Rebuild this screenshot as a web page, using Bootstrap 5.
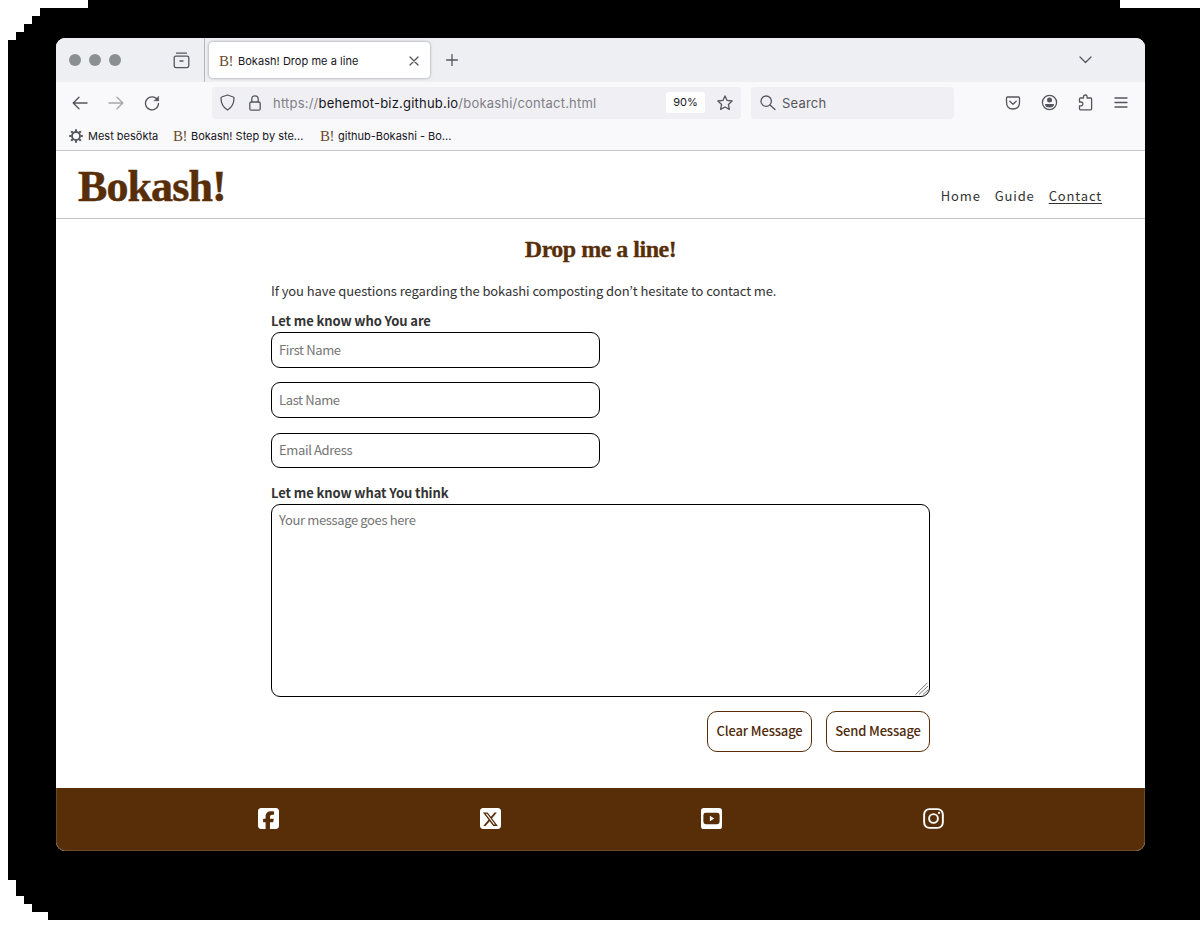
<!DOCTYPE html>
<html lang="en">
<head>
<meta charset="utf-8">
<meta name="viewport" content="width=device-width, initial-scale=1">
<title>Bokash! Drop me a line</title>
<link href="https://cdn.jsdelivr.net/npm/bootstrap@5.3.0/dist/css/bootstrap.min.css" rel="stylesheet">
<style>
:root { --brown: #582e09; }
body { background: #fff; overflow: hidden; }
svg { display: block; flex: none; }
.backdrop { width: 1201px; height: 925px; padding: 38px 56px 0; background: #000;
  clip-path: polygon(88px 0, 1120px 0, 1120px 8px, 1200px 8px, 1200px 920px, 48px 920px, 48px 912px, 32px 912px, 32px 904px, 24px 904px, 24px 896px, 16px 896px, 16px 880px, 8px 880px, 8px 40px, 16px 40px, 16px 32px, 24px 32px, 24px 24px, 32px 24px, 32px 16px, 40px 16px, 40px 8px, 88px 8px); }
.window { width: 1089px; height: 813px; border-radius: 9px; background: #fff; }
.chrome { font-family: Inter, sans-serif; color: #15141a; font-size: 11px; line-height: 16px; }
.chrome svg { fill: none; stroke: #55555d; stroke-width: 1.3; stroke-linecap: round; stroke-linejoin: round; }
.tabbar { height: 44px; background: #eeeff3; border-radius: 9px 9px 0 0; }
.dot { width: 12px; height: 12px; border-radius: 50%; background: #8b8f91; margin-right: 8px; }
.tabrule { width: 1px; height: 44px; background: #b5b5b9; margin-left: 13px; }
.browsertab { width: 221px; height: 36px; background: #fff; border-radius: 4px; box-shadow: 0 0 3px rgba(0,0,0,.4); margin-left: 4px; padding: 1px 11px 0 10px; }
.fav { font-family: "Liberation Serif", serif; font-size: 15px; line-height: 16px; color: #6b4a2a; width: 13px; letter-spacing: -.5px; white-space: nowrap; }
.toolbar { height: 37px; background: #f9f9fb; padding: 4px 0 0; }
.urlbox { height: 32px; background: #f0f0f4; border-radius: 4px; }
.urltext { font-size: 13px; color: #7f7f86; letter-spacing: .21px; }
.urltext b { font-weight: 400; color: #15141a; }
.searchtext { font-size: 13px; color: #56565c; letter-spacing: .2px; }
.zoompill { width: 39px; height: 21px; background: #fff; border-radius: 3px; line-height: 21px; }
.bookmarks { height: 32px; background: #f9f9fb; border-bottom: 1px solid #c6c6c8; padding: 9px 0 0 13px; }
.site { font-family: "Noto Sans CJK KR", "Noto Sans", sans-serif; color: #333; font-size: 13px; }
.sitehead { height: 68px; border-bottom: 1px solid #c4c4c4; padding: 0 43px 0 22px; }
.logo { font-family: "Liberation Serif", serif; font-weight: 700; font-size: 44px; line-height: 50px; letter-spacing: -.9px; -webkit-text-stroke: .5px var(--brown); color: var(--brown); margin-top: 11px; }
.menu { gap: 14px; margin-top: 35px; }
.menu a { color: #333; text-decoration: none; letter-spacing: .85px; line-height: 20px; font-size: 13px; }
.menu a.current { text-decoration: underline; text-underline-offset: 2px; }
.page { height: 569px; padding: 16px 215px 0; }
.headline { font-family: "Liberation Serif", serif; font-weight: 700; font-size: 24px; line-height: 28px; letter-spacing: -.5px; -webkit-text-stroke: .3px var(--brown); color: var(--brown); }
.intro { line-height: 20px; margin: 18px 0 0; letter-spacing: -.09px; }
.formlabel { display: block; font-weight: 700; line-height: 20px; height: 21px; letter-spacing: -.1px; }
.field.form-control { font: inherit; border: 1px solid #000; border-radius: 9px; padding: 0 7px 2px; line-height: 20px; letter-spacing: -.36px; color: #333; background: #fff; }
.field::placeholder { color: #757575; opacity: 1; }
input.field { width: 329px; height: 36px; }
textarea.field.form-control { height: 193px; padding-top: 5px; resize: none; }
.grip { position: absolute; right: 1px; bottom: 1px; }
.action.btn { font: inherit; height: 41px; line-height: 20px; border: 1px solid var(--brown); border-radius: 10px; color: #4f2a0a; background: #fff; padding: 0 0 2px; font-weight: 500; letter-spacing: -.14px; }
.sitefoot { height: 63px; background: var(--brown); border-radius: 0 0 9px 9px; border: 1px solid #6b4a28; border-top: 0; padding: 20px 200px 0 201px; }
</style>
</head>
<body>
<div class="backdrop">
<div class="window">
<div class="chrome">
  <div class="tabbar d-flex align-items-center">
    <div class="d-flex" style="margin-left:13px;width:104px"><i class="dot"></i><i class="dot"></i><i class="dot"></i></div>
    <svg style="margin-right:1px" width="17" height="17" viewBox="0 0 17 17"><path d="M3.500 1.200h10M2.800 4.200h11.400q1.600 0 1.600 1.600v8q0 1.800-1.800 1.800H3q-1.800 0-1.800-1.800v-8q0-1.600 1.600-1.600zM7 9h3"/></svg>
    <div class="tabrule"></div>
    <div class="browsertab d-flex align-items-center"><span class="fav">B!</span><span style="margin-left:6px;letter-spacing:.04px">Bokash! Drop me a line</span>
      <svg class="ms-auto" width="10" height="10" viewBox="0 0 10 10"><path d="M1 1l8 8M9 1l-8 8"/></svg></div>
    <svg style="margin-left:16px" width="12" height="12" viewBox="0 0 12 12"><path d="M6 .6v10.800M.6 6h10.800"/></svg>
    <svg style="margin-left:621px" width="13" height="8" viewBox="0 0 13 8"><path d="M1 1l5.500 5.500L12 1"/></svg>
  </div>
  <div class="toolbar d-flex align-items-center">
    <svg style="margin-left:16px" width="16" height="14" viewBox="0 0 16 14"><path d="M15 7H1.500M7 1.200L1.200 7 7 12.800"/></svg>
    <svg style="margin-left:20px;opacity:.5" width="16" height="14" viewBox="0 0 16 14"><path d="M1 7h13.500M9 1.200L14.800 7 9 12.800"/></svg>
    <svg style="margin-left:20px" width="16" height="16" viewBox="0 0 16 16"><path d="M13.800 5.400A6.500 6.500 0 1 0 14.500 8.500"/><path d="M14.600 1.500v4.300H10.300z" fill="#55555d" stroke-width=".6"/></svg>
    <div class="urlbox d-flex align-items-center" style="width:529px;margin-left:52px;padding-left:8px">
      <svg width="15" height="17" viewBox="0 0 15 17"><path d="M7.500 1L13.300 3q.7.300.7 1c0 6-2.200 9.500-6.500 12C3.200 13.500 1 10 1 4q0-.7.700-1z"/></svg>
      <svg style="margin-left:14px" width="12" height="16" viewBox="0 0 12 16"><rect x=".8" y="7" width="10.400" height="8.200" rx="1.500"/><path d="M2.800 7V4q0-3.200 3.200-3.200T9.200 4v3"/></svg>
      <span class="urltext" style="margin-left:12px">https://<b>behemot-biz.github.io</b>/bokashi/contact.html</span>
      <span class="zoompill text-center ms-auto">90%</span>
      <svg style="margin:0 8px 0 12px" width="16" height="16" viewBox="0 0 16 16"><path d="M8 .9l2.100 4.500 5 .6-3.700 3.400 1 5L8 12l-4.400 2.400 1-5L.9 6l5-.6z"/></svg>
    </div>
    <div class="urlbox d-flex align-items-center" style="width:203px;margin-left:10px;padding-left:9px">
      <svg width="16" height="16" viewBox="0 0 16 16"><circle cx="6.200" cy="6.200" r="5.200"/><path d="M10 10l5 4.500"/></svg>
      <span class="searchtext" style="margin-left:6px">Search</span>
    </div>
    <svg style="margin-left:51px" width="16" height="14" viewBox="0 0 16 14"><path d="M2.500 1h11Q14.500 1 14.500 2.500V6Q14.500 13 8 13T1.500 6V2.500Q1.500 1 2.500 1zM4.800 5.300L8 8.300l3.200-3"/></svg>
    <svg style="margin-left:20px" width="17" height="17" viewBox="0 0 17 17"><circle cx="8.500" cy="8.500" r="7.100"/><circle cx="8.500" cy="6" r="2.500" fill="#55555d" stroke="none"/><path d="M4 10h9q0 3.500-4.500 3.500T4 10z" fill="#55555d" stroke="none"/></svg>
    <svg style="margin-left:20px" width="15" height="17" viewBox="0 0 15 17"><path d="M1.500 6V5q0-1 1-1H5.500V2.800a1.800 1.800 0 0 1 3.600 0V4h3.500q1 0 1 1v9.800q0 1-1 1H2.500q-1 0-1-1v-3H3a1.800 1.800 0 0 0 0-3.800H1.500z"/></svg>
    <svg style="margin-left:21px" width="14" height="12" viewBox="0 0 14 12"><path d="M1 1h12M1 5.500h12M1 10h12"/></svg>
  </div>
  <div class="bookmarks d-flex align-items-start">
    <svg width="14" height="14" viewBox="0 0 14 14" style="margin-top:1px"><circle cx="7" cy="7" r="4" stroke-width="1.800"/><path d="M7 .2v2.300M7 11.500v2.300M.2 7h2.300M11.500 7h2.300M2.200 2.200l1.600 1.600M10.200 10.200l1.600 1.600M2.200 11.800l1.600-1.600M10.200 3.800l1.600-1.600" stroke-width="2" stroke-linecap="butt"/></svg>
    <span style="margin-left:5px;width:85px">Mest besökta</span>
    <span class="fav">B!</span><span class="text-nowrap" style="margin-left:5px;width:129px">Bokash! Step by ste...</span>
    <span class="fav">B!</span><span class="text-nowrap" style="margin-left:5px">github-Bokashi - Bo...</span>
  </div>
</div>
<div class="site">
  <header class="sitehead d-flex justify-content-between">
    <div class="logo">Bokash!</div>
    <nav class="menu d-flex"><a href="#">Home</a><a href="#">Guide</a><a href="#" class="current">Contact</a></nav>
  </header>
  <main class="page">
    <h2 class="headline text-center mb-0">Drop me a line!</h2>
    <p class="intro">If you have questions regarding the bokashi composting don’t hesitate to contact me.</p>
    <form>
      <label class="formlabel" for="first" style="margin-top:10px">Let me know who You are</label>
      <input class="form-control field" id="first" placeholder="First Name">
      <input class="form-control field" style="margin-top:14px" placeholder="Last Name" aria-label="Last Name">
      <input class="form-control field" style="margin-top:15px;height:35px" placeholder="Email Adress" aria-label="Email Adress">
      <label class="formlabel" for="msg" style="margin-top:15px">Let me know what You think</label>
      <div class="position-relative">
        <textarea class="form-control field" id="msg" placeholder="Your message goes here"></textarea>
        <svg class="grip" width="14" height="14" viewBox="0 0 14 14" fill="none" stroke="#666" stroke-width=".9"><path d="M.5 12.500L12.500 .8M4 12.500L13 4M8 12.500L13 8"/></svg>
      </div>
      <div class="d-flex justify-content-end" style="gap:14px;margin-top:14px">
        <button type="button" class="btn action" style="width:105px">Clear Message</button>
        <button type="button" class="btn action" style="width:104px">Send Message</button>
      </div>
    </form>
  </main>
  <footer class="sitefoot d-flex justify-content-between">
    <svg width="21" height="21" viewBox="0 0 448 448"><path fill="#fff" d="M64 0C29 0 0 29 0 64v320c0 35 29 64 64 64h98V306h-53v-78h53v-33c0-87 39-127 125-127 16 0 44 3 56 6v71c-6-1-17-1-30-1-42 0-58 16-58 57v27h83l-14 78h-69v142h129c35 0 64-29 64-64V64c0-35-29-64-64-64H64z"/></svg>
    <svg width="21" height="21" viewBox="0 0 448 448"><path fill="#fff" fill-rule="evenodd" d="M64 0C29 0 0 29 0 64v320c0 35 29 64 64 64h320c35 0 64-29 64-64V64c0-35-29-64-64-64H64zm297 96L255 217l125 165h-98l-76-100-88 100H69l113-130L63 96h100l69 92 80-92h49zm-38 257L150 124h-29l175 229h27z"/></svg>
    <svg width="21" height="21" viewBox="0 0 22 22"><path fill="#fff" fill-rule="evenodd" d="M3 0h16q3 0 3 3v16q0 3-3 3H3q-3 0-3-3V3q0-3 3-3zM5 5Q2.500 5 2.500 7.500v7q0 2.500 2.500 2.500h12q2.500 0 2.500-2.500v-7q0-2.500-2.500-2.500zM9.300 8.200l4.500 2.800-4.500 2.800z"/></svg>
    <svg width="21" height="21" viewBox="0 0 22 22" fill="none" stroke="#fff" stroke-width="2"><rect x="1.200" y="1.200" width="19.600" height="19.600" rx="5.500"/><circle cx="11" cy="11" r="4.600"/><circle cx="16.800" cy="5.200" r="1.200" fill="#fff" stroke="none"/></svg>
  </footer>
</div>
</div>
</div>
<script src="https://cdn.jsdelivr.net/npm/bootstrap@5.3.0/dist/js/bootstrap.bundle.min.js"></script>
</body>
</html>
